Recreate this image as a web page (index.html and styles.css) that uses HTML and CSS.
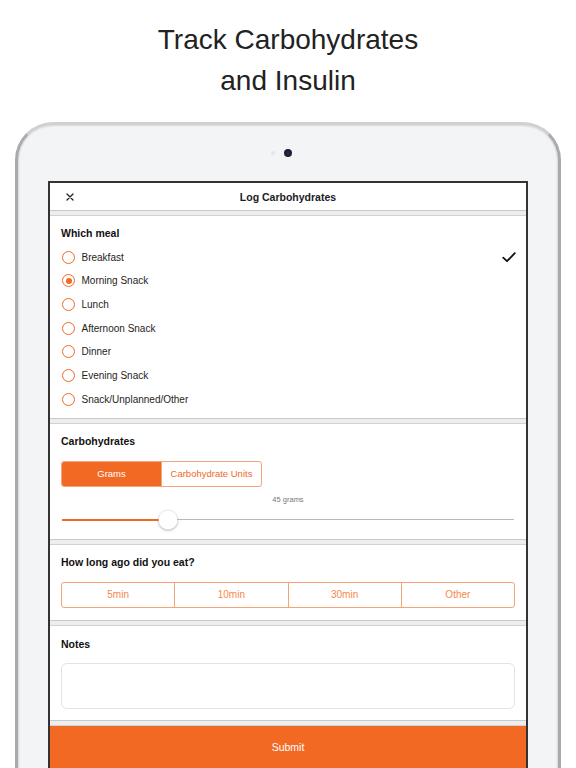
FILE: index.html
```html
<!DOCTYPE html>
<html lang="en">
<head>
<meta charset="utf-8">
<title>Track Carbohydrates and Insulin</title>
<link rel="stylesheet" href="styles.css">
</head>
<body>
<header class="headline">
  <h1>Track Carbohydrates<br>and Insulin</h1>
</header>
<div class="device">
  <div class="camera-row">
    <span class="sensor"></span>
    <span class="camera"></span>
  </div>
  <div class="screen">
    <div class="topbar">
      <span class="close">
        <svg width="8" height="8" viewBox="0 0 8 8"><path d="M1 1 L7 7 M7 1 L1 7" stroke="#222" stroke-width="1.3" stroke-linecap="round"/></svg>
      </span>
      <span class="topbar-title">Log Carbohydrates</span>
      <span></span>
    </div>
    <div class="sep"></div>

    <section class="section meal">
      <h2 class="section-title">Which meal</h2>
      <div class="option"><span class="radio"></span><span class="option-label">Breakfast</span>
        <svg class="check" width="14" height="11" viewBox="0 0 14 11"><path d="M1.2 5.6 L5 9.2 L12.8 1.2" fill="none" stroke="#111" stroke-width="1.8" stroke-linecap="round" stroke-linejoin="round"/></svg>
      </div>
      <div class="option"><span class="radio on"></span><span class="option-label">Morning Snack</span></div>
      <div class="option"><span class="radio"></span><span class="option-label">Lunch</span></div>
      <div class="option"><span class="radio"></span><span class="option-label">Afternoon Snack</span></div>
      <div class="option"><span class="radio"></span><span class="option-label">Dinner</span></div>
      <div class="option"><span class="radio"></span><span class="option-label">Evening Snack</span></div>
      <div class="option"><span class="radio"></span><span class="option-label">Snack/Unplanned/Other</span></div>
    </section>
    <div class="sep"></div>

    <section class="section carbs">
      <h2 class="section-title">Carbohydrates</h2>
      <div class="seg seg-units">
        <span class="seg-item active">Grams</span>
        <span class="seg-item">Carbohydrate Units</span>
      </div>
      <div class="amount">45 grams</div>
      <div class="slider">
        <div class="track">
          <div class="fill" style="width: 23.5%"></div>
          <span class="thumb" style="left: 23.5%"></span>
        </div>
      </div>
    </section>
    <div class="sep"></div>

    <section class="section when">
      <h2 class="section-title">How long ago did you eat?</h2>
      <div class="seg seg-time">
        <span class="seg-item">5min</span>
        <span class="seg-item">10min</span>
        <span class="seg-item">30min</span>
        <span class="seg-item">Other</span>
      </div>
    </section>
    <div class="sep"></div>

    <section class="section notes">
      <h2 class="section-title">Notes</h2>
      <div class="textarea"></div>
    </section>
    <div class="sep"></div>

    <div class="submit">Submit</div>
  </div>
</div>
</body>
</html>
```
FILE: styles.css
```css
* { box-sizing: border-box; }
html, body { margin: 0; padding: 0; }
body {
  width: 576px;
  height: 768px;
  overflow: hidden;
  background: #ffffff;
  font-family: "Liberation Sans", Arial, sans-serif;
  color: #1c1c1e;
}
.headline {
  padding-top: 19px;
  height: 122px;
  text-align: center;
}
.headline h1 {
  margin: 0;
  font-weight: 400;
  font-size: 28px;
  line-height: 41px;
  color: #222;
}
.device {
  margin-left: 15px;
  width: 546px;
  height: 720px;
  border: 3px solid #a9aaad;
  border-top-color: #cfd0d2;
  border-radius: 38px 38px 0 0;
  background: #f3f4f6;
  box-shadow: inset 0 0 0 1px #dcdde0, inset 0 0 0 2px #eceef0;
}
.camera-row {
  margin-top: 24px;
  height: 8px;
  margin-bottom: 24px;
  display: flex;
  justify-content: center;
  align-items: center;
}
.sensor {
  width: 4px; height: 4px;
  border-radius: 50%;
  background: #e4e5e8;
  margin-right: 9px;
}
.camera {
  width: 8px; height: 8px;
  border-radius: 50%;
  background: radial-gradient(circle at 50% 50%, #1d2a55 0, #1c1f27 60%, #3a3b40 100%);
  margin-right: 13px;
}
.screen {
  width: 480px;
  margin: 0 auto;
  height: 620px;
  border: 2px solid #333335;
  border-bottom: 0;
  background: #fff;
  overflow: hidden;
}
.topbar {
  height: 27px;
  display: grid;
  grid-template-columns: 40px 1fr 40px;
  align-items: center;
}
.close {
  display: flex;
  justify-content: center;
  align-items: center;
}
.topbar-title {
  text-align: center;
  font-size: 10.5px;
  font-weight: 700;
  color: #1c1c1e;
}
.sep {
  height: 6px;
  background: #eeeef0;
  border-top: 1px solid #c9c9cc;
  border-bottom: 1px solid #d2d2d5;
}
.section {
  padding: 10px 11px 0 11px;
}
.section-title {
  margin: 0;
  font-size: 10.5px;
  line-height: 14px;
  font-weight: 700;
  color: #111;
}
.meal { padding-bottom: 6.8px; }
.meal .section-title { margin-bottom: 5.5px; }
.option {
  height: 23.67px;
  display: flex;
  align-items: center;
}
.radio {
  width: 13px; height: 13px;
  border-radius: 50%;
  border: 1.5px solid #f26924;
  margin-left: 1px;
  margin-right: 6.5px;
  display: flex;
  justify-content: center;
  align-items: center;
}
.radio.on::after {
  content: "";
  width: 6px; height: 6px;
  border-radius: 50%;
  background: #f26924;
}
.option-label {
  font-size: 10px;
  color: #1e1e20;
}
.check { margin-left: auto; margin-right: -1px; }

.carbs { padding-bottom: 9px; }
.seg {
  display: flex;
  margin-top: 13px;
  height: 26px;
  border: 1px solid #f5a47a;
  border-radius: 3px;
  overflow: hidden;
}
.seg-units { width: 201px; }
.seg-item {
  flex: 1;
  display: flex;
  justify-content: center;
  align-items: center;
  font-size: 9.5px;
  color: #f26924;
}
.seg-item + .seg-item { border-left: 1px solid #f5a47a; }
.seg-units .seg-item.active {
  background: #f26924;
  color: #fff;
}
.amount {
  margin-top: 8px;
  line-height: 10px;
  font-size: 7.5px;
  text-align: center;
  color: #777;
}
.slider {
  margin-top: 5px;
  height: 20px;
  display: flex;
  align-items: center;
  padding: 0 1px;
}
.track {
  position: relative;
  width: 100%;
  height: 1px;
  background: #b9b9bb;
}
.fill {
  height: 2px;
  margin-top: -0.5px;
  background: #f26924;
}
.thumb {
  position: absolute;
  top: 50%;
  width: 19px; height: 19px;
  border-radius: 50%;
  background: #fff;
  transform: translate(-50%, -50%);
  box-shadow: 0 1px 3px rgba(0,0,0,0.28), 0 0 0 0.5px rgba(0,0,0,0.08);
}

.when { padding-bottom: 12px; }
.seg-time .seg-item { color: #f5874c; font-size: 10px; }

.notes { padding-top: 11px; padding-bottom: 11px; }
.textarea {
  margin-top: 12px;
  height: 46px;
  border: 1px solid #e4e4e6;
  border-radius: 6px;
}
.submit {
  height: 44px;
  padding-bottom: 2px;
  background: #f26924;
  color: #fff;
  font-size: 10.5px;
  display: flex;
  justify-content: center;
  align-items: center;
}
```
